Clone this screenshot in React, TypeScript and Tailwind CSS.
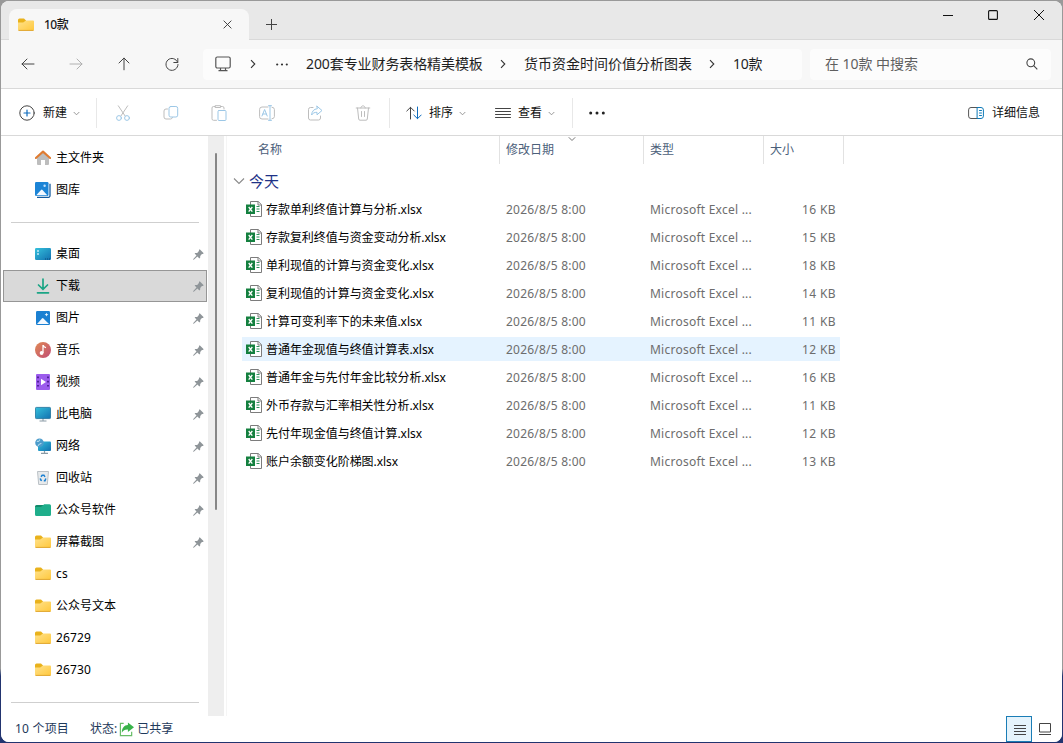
import type { ReactNode } from "react"
import clsx from "clsx"

type IconProps = { className?: string }

const places = [
  { name: "桌面", icon: <DesktopIcon />, pinned: true },
  { name: "下载", icon: <DownloadIcon />, pinned: true, active: true },
  { name: "图片", icon: <PictureIcon />, pinned: true },
  { name: "音乐", icon: <MusicIcon />, pinned: true },
  { name: "视频", icon: <VideoIcon />, pinned: true },
  { name: "此电脑", icon: <ComputerIcon />, pinned: true },
  { name: "网络", icon: <NetworkIcon />, pinned: true },
  { name: "回收站", icon: <RecycleIcon />, pinned: true },
  { name: "公众号软件", icon: <GreenFolderIcon />, pinned: true },
  { name: "屏幕截图", icon: <FolderIcon />, pinned: true },
  { name: "cs", icon: <FolderIcon /> },
  { name: "公众号文本", icon: <FolderIcon /> },
  { name: "26729", icon: <FolderIcon /> },
  { name: "26730", icon: <FolderIcon /> },
]

const files = [
  { name: "存款单利终值计算与分析", size: 16 },
  { name: "存款复利终值与资金变动分析", size: 15 },
  { name: "单利现值的计算与资金变化", size: 18 },
  { name: "复利现值的计算与资金变化", size: 14 },
  { name: "计算可变利率下的未来值", size: 11 },
  { name: "普通年金现值与终值计算表", size: 12, hover: true },
  { name: "普通年金与先付年金比较分析", size: 16 },
  { name: "外币存款与汇率相关性分析", size: 11 },
  { name: "先付年现金值与终值计算", size: 12 },
  { name: "账户余额变化阶梯图", size: 13 },
]

function FolderIcon({ className = "h-4 w-4" }: IconProps) {
  return (
    <svg viewBox="0 0 16 16" className={className}>
      <defs>
        <linearGradient id="folder" x1="0" y1="0" x2="1" y2="1">
          <stop offset="0" stopColor="#ffe28c" />
          <stop offset="1" stopColor="#ffc83d" />
        </linearGradient>
      </defs>
      <path d="M0 3a1.500 1.500 0 0 1 1.500-1.500H6L8 3.500V8H0z" fill="#e9b21c" />
      <path d="M0 5.600h5.200L8 3.400h7A1 1 0 0 1 16 4.400v8a1.200 1.200 0 0 1-1.200 1.200H1.200A1.200 1.200 0 0 1 0 12.400z" fill="url(#folder)" />
      <path d="M.5 13.400h15" stroke="#e0a52c" strokeWidth="1" />
    </svg>
  )
}

function GreenFolderIcon() {
  return (
    <svg viewBox="0 0 16 16" className="h-4 w-4">
      <path d="M0 4.500A1.500 1.500 0 0 1 1.500 3H9v3H0z" fill="#128a6b" />
      <path d="M0 5h6l3.200-2.700h5.300A1.500 1.500 0 0 1 16 3.800v8.700a1.500 1.500 0 0 1-1.500 1.500h-13A1.500 1.500 0 0 1 0 12.500z" fill="#1fae8b" />
    </svg>
  )
}

function HomeIcon() {
  return (
    <svg viewBox="0 0 16 16" className="h-4 w-4">
      <path d="M2 7.500 8 2l6 5.500V14a1 1 0 0 1-1 1h-3v-5H6v5H3a1 1 0 0 1-1-1z" fill="#bdbdbd" />
      <path d="M.9 8 8 1.600 15.100 8" fill="none" stroke="#df7b31" strokeWidth="2.100" strokeLinecap="round" strokeLinejoin="round" />
    </svg>
  )
}

function GalleryIcon() {
  return (
    <svg viewBox="0 0 16 16" className="h-4 w-4">
      <path d="M15 1.800v12a1.500 1.500 0 0 1-1.500 1.500H2" fill="none" stroke="#135a9e" strokeWidth="1.300" />
      <rect width="13.500" height="14" rx="1.200" fill="#1b84d6" />
      <path d="M1.200 13.200 6 8a1 1 0 0 1 1.500 0l4.800 5.200z" fill="#f2f8ff" />
      <circle cx="9.600" cy="3.800" r="1.200" fill="#bfe0fb" />
    </svg>
  )
}

function DesktopIcon() {
  return (
    <svg viewBox="0 0 16 16" className="h-4 w-4">
      <defs>
        <linearGradient id="screen" x1="0" y1="0" x2="1" y2="1">
          <stop offset="0" stopColor="#35c1dc" />
          <stop offset="1" stopColor="#1271b0" />
        </linearGradient>
      </defs>
      <rect y="2" width="16" height="12" rx="1.200" fill="url(#screen)" />
      <path d="M2.200 4.200h1.600v1.600H2.200zM2.200 7.200h1.600v1.600H2.200z" fill="#e6f9ff" />
      <path d="M10 13h1M12 13h1M14 13h1" stroke="#0b4a79" />
    </svg>
  )
}

function DownloadIcon() {
  return (
    <svg viewBox="0 0 16 16" className="h-4 w-4" fill="none" stroke="#1ba585" strokeWidth="1.700" strokeLinecap="round">
      <path d="M8 1v10M3.500 7 8 11.300 12.500 7M2.500 14.800h11" />
    </svg>
  )
}

function PictureIcon() {
  return (
    <svg viewBox="0 0 16 16" className="h-4 w-4">
      <rect x="1" y="1" width="14" height="14" rx="1.200" fill="#1b80d2" />
      <path d="m2 14 5-5.600a1 1 0 0 1 1.400 0L14 14z" fill="#f4f9ff" />
      <path d="m11.500 2.800.6 1.300 1.300.6-1.300.6-.6 1.300-.6-1.300-1.300-.6 1.300-.6z" fill="#e8f5ff" />
    </svg>
  )
}

function MusicIcon() {
  return (
    <svg viewBox="0 0 16 16" className="h-4 w-4">
      <defs>
        <linearGradient id="music" x1="0" y1="0" x2="1" y2="1">
          <stop offset="0" stopColor="#e08a55" />
          <stop offset="1" stopColor="#c14c75" />
        </linearGradient>
      </defs>
      <circle cx="8" cy="8" r="8" fill="url(#music)" />
      <circle cx="6.600" cy="11" r="1.900" fill="#fff" />
      <path d="M8 11V3.600h.4c.4 1.400 1 1.700 2.600 2" fill="none" stroke="#fff" strokeWidth="1.300" />
    </svg>
  )
}

function VideoIcon() {
  return (
    <svg viewBox="0 0 16 16" className="h-4 w-4">
      <rect x="1" y="0" width="14" height="16" rx="1" fill="#9c5cec" />
      <path d="M3 2.500v12M13 2.500v12" stroke="#43188a" strokeWidth="1.700" strokeDasharray="1.700 2.500" />
      <path d="M6 4.800 11 8l-5 3.200z" fill="#fff" />
    </svg>
  )
}

function ComputerIcon() {
  return (
    <svg viewBox="0 0 16 16" className="h-4 w-4">
      <path d="M8 12v3M4.500 15h7" stroke="#8a9aa5" />
      <rect x=".4" y="1.400" width="15.200" height="11.200" rx="1" fill="url(#screen)" stroke="#1b6e98" strokeWidth=".8" />
    </svg>
  )
}

function NetworkIcon() {
  return (
    <svg viewBox="0 0 16 16" className="h-4 w-4">
      <path d="M9.500 12v3M6 15.400h7" stroke="#8a9aa5" strokeWidth="1.200" />
      <rect x="3" y="3.500" width="13" height="9.500" rx="1" fill="url(#screen)" />
      <circle cx="4.500" cy="4.800" r="4.300" fill="#4c9ccb" />
      <path d="M2 3c1 1 2 .5 3-1.500M3 8c.4-1.800 1.600-2 3.400-2.600" fill="none" stroke="#b5dcef" strokeWidth="1.100" />
    </svg>
  )
}

function RecycleIcon() {
  return (
    <svg viewBox="0 0 16 16" className="h-4 w-4">
      <path d="M2.500 1.500h11l-1.200 13H3.700z" fill="#e7eaec" stroke="#b3babf" strokeWidth=".9" />
      <path d="m6 6.800 1.200-1.600h1.700L10 6.800M10.800 8.500 10 10.700H8.800M6.900 10.700 5.700 10 5.300 8.300" fill="none" stroke="#1b80d2" strokeWidth="1.500" />
    </svg>
  )
}

function PinIcon() {
  return (
    <svg viewBox="0 0 11 11" className="h-[11px] w-[11px]" fill="#8f9599">
      <path d="m6.700.3 4 4-.8.700-1 .1-1.700 1.800v1.700l-.8.800-2-2L.8 10.700l-.6.100.1-.7 3.200-3.500-1.900-2 .7-.7h1.900l1.700-1.800.1-1z" />
    </svg>
  )
}

function ExcelIcon() {
  return (
    <svg viewBox="0 0 16 16" className="h-4 w-4 shrink-0">
      <path d="M4.500.5h7.700l3.300 3.200v11.800h-11z" fill="#fff" stroke="#7c7c7c" />
      <path d="M12 .5V4h3.500" fill="none" stroke="#7c7c7c" />
      <path d="M10.500 5.500h3M10.500 8h3M10.500 10.500h3" stroke="#2a9159" />
      <rect y="3.500" width="9" height="9.500" fill="#14803f" />
      <path d="m2.700 6 3.600 4.600M6.300 6l-3.600 4.600" stroke="#fff" strokeWidth="1.300" />
    </svg>
  )
}

function ChevronDown({ className = "h-[7px] w-[7px] text-[#8a8a8a]" }: IconProps) {
  return (
    <svg viewBox="0 0 8 8" className={className} fill="none" stroke="currentColor" strokeWidth="1">
      <path d="m.8 2.300 3.200 3.200 3.200-3.200" />
    </svg>
  )
}

function ChevronRight() {
  return (
    <svg viewBox="0 0 6 10" className="h-[10px] w-[6px] shrink-0" fill="none" stroke="#333" strokeWidth="1.100">
      <path d="m1 1.200 3.800 3.800L1 8.800" />
    </svg>
  )
}

function LineIcon({ children, className = "text-[#444]" }: { children: ReactNode; className?: string }) {
  return (
    <svg viewBox="0 0 16 16" className={clsx("h-4 w-4 shrink-0", className)} fill="none" stroke="currentColor" strokeLinecap="round" strokeLinejoin="round">
      {children}
    </svg>
  )
}

function TitleBar() {
  return (
    <div className="flex h-[39px] shrink-0 items-start border-b border-[#d9d9d9] bg-[#e8e8e8]">
      <div className="ml-2 mt-2 flex h-[31px] w-[240px] shrink-0 items-center rounded-t-lg bg-[#f7f7f7] pl-[9px] pr-[17px]">
        <FolderIcon />
        <span className="ml-[10px] flex-1 text-[12px] font-medium tracking-[-0.500px] text-[#1a1a1a]">10款</span>
        <svg viewBox="0 0 10 10" className="h-[9px] w-[9px]" stroke="#333" fill="none">
          <path d="m.7.7 8.600 8.600M9.300.7.7 9.300" />
        </svg>
      </div>
      <svg viewBox="0 0 11 11" className="ml-[17px] mt-[18px] h-[11px] w-[11px]" stroke="#444">
        <path d="M5.500 0v11M0 5.500h11" />
      </svg>
      <div className="ml-auto mr-[18px] mt-[9px] flex items-center">
        <svg viewBox="0 0 10 10" className="mr-[35px] h-[10px] w-[10px]" stroke="#111" fill="none">
          <path d="M0 5.500h10" />
        </svg>
        <svg viewBox="0 0 10 10" className="mr-9 h-[10px] w-[10px]" stroke="#111" fill="none" strokeWidth="1.100">
          <rect x=".6" y=".6" width="8.800" height="8.800" rx="1" />
        </svg>
        <svg viewBox="0 0 10 10" className="h-[10px] w-[10px]" stroke="#111" fill="none">
          <path d="m0 0 10 10M10 0 0 10" />
        </svg>
      </div>
    </div>
  )
}

function AddressBar() {
  return (
    <div className="flex h-[49px] shrink-0 items-center border-b border-[#d9d9d9] bg-[#f7f7f7]">
      <div className="flex w-[202px] shrink-0 items-center gap-8 pl-[19px]">
        <LineIcon><path d="M2 8h12M7 3 2 8l5 5" /></LineIcon>
        <LineIcon className="text-[#b0b0b0]"><path d="M2 8h12M9 3l5 5-5 5" /></LineIcon>
        <LineIcon><path d="M8 2.200v11.600M3 7l5-5 5 5" /></LineIcon>
        <LineIcon><path d="M13.700 6.500A6 6 0 1 0 14 8.500M13.800 2.500v4h-4" /></LineIcon>
      </div>
      <div className="flex h-[31px] w-[599px] items-center rounded bg-[#fcfcfc] pl-3 text-[#1f1f1f]">
        <svg viewBox="0 0 16 16" className="h-4 w-4 shrink-0" fill="none" stroke="#555" strokeWidth="1.200">
          <rect x=".8" y="1" width="14.400" height="11" rx="1.500" />
          <path d="M5.500 12v2.500M10.500 12v2.500M3.500 14.700h9" />
        </svg>
        <span className="ml-[19px] flex"><ChevronRight /></span>
        <svg viewBox="0 0 12 3" className="ml-5 h-[3px] w-[12px]" fill="#333">
          <circle cx="1.200" cy="1.500" r="1.100" /><circle cx="6" cy="1.500" r="1.100" /><circle cx="10.800" cy="1.500" r="1.100" />
        </svg>
        <span className="ml-[18px] w-[178px] whitespace-nowrap pb-0.5 text-[14px] tracking-[-0.090px]">200套专业财务表格精美模板</span>
        <span className="ml-[16px] flex"><ChevronRight /></span>
        <span className="ml-[18px] w-[169px] whitespace-nowrap pb-0.5 text-[14px]">货币资金时间价值分析图表</span>
        <span className="ml-[16px] flex"><ChevronRight /></span>
        <span className="ml-[18px] whitespace-nowrap pb-0.5 text-[14px] tracking-[-0.300px]">10款</span>
      </div>
      <div className="ml-2 flex h-[31px] w-[241px] items-center justify-between rounded bg-[#fcfcfc] pl-[15px] pr-[13px] text-[14px] text-[#5f5f5f]">
        <span className="pb-0.5 tracking-[-0.050px]">在 10款 中搜索</span>
        <svg viewBox="0 0 12 12" className="h-[12px] w-[12px]" fill="none" stroke="#444" strokeWidth="1.100">
          <circle cx="4.800" cy="4.800" r="3.900" />
          <path d="m7.700 7.700 3.600 3.600" />
        </svg>
      </div>
    </div>
  )
}

function ToolBar() {
  return (
    <div className="flex h-[47px] shrink-0 items-center border-b border-[#d9d9d9] bg-white pt-0.5 text-[12px] text-[#111]">
      <div className="flex h-[30px] w-[96px] shrink-0 items-center border-r border-[#e8e8e8] pl-[18px]">
        <LineIcon className="text-[#444]">
          <circle cx="8" cy="8" r="7.200" />
          <path d="M8 5v6M5 8h6" stroke="#0f6cbd" strokeWidth="1.200" />
        </LineIcon>
        <span className="ml-2 mr-[6px]">新建</span>
        <ChevronDown />
      </div>
      <div className="flex h-[30px] w-[293px] shrink-0 items-center gap-8 border-r border-[#e8e8e8] pl-[18px]">
        <LineIcon className="text-[#bdbdbd]">
          <path d="m3.300.8 6.700 10M12.700.8 6 10.800" />
          <circle cx="4" cy="13" r="2.400" stroke="#9cc7e6" /><circle cx="12" cy="13" r="2.400" stroke="#9cc7e6" />
        </LineIcon>
        <LineIcon className="text-[#bdbdbd]">
          <path d="M4.500 4H3a2 2 0 0 0-2 2v6a2 2 0 0 0 2 2h4.500a2 2 0 0 0 2-1.500" />
          <rect x="6" y="1.500" width="8.700" height="10.500" rx="1.800" stroke="#9cc7e6" />
        </LineIcon>
        <LineIcon className="text-[#bdbdbd]">
          <path d="M5.500 15.300H2.500a1.500 1.500 0 0 1-1.500-1.500V3A1.500 1.500 0 0 1 2.500 1.500H4M10 1.500h1.500A1.500 1.500 0 0 1 13 3v1" />
          <path d="M4.500.7h5v1.800h-5z" />
          <rect x="7" y="5.500" width="8" height="10" rx="1" stroke="#9cc7e6" />
        </LineIcon>
        <LineIcon className="text-[#bdbdbd]">
          <path d="M9 2H3a2.400 2.400 0 0 0-2.400 2.400v7A2.400 2.400 0 0 0 3 14h6M13 2.200a2.400 2.400 0 0 1 2.400 2.400v7A2.400 2.400 0 0 1 13 13.800" />
          <path d="m3 11 2.600-6.500L8.200 11M3.900 9h3.400M11 .7v14.600M9.500.7h3M9.500 15.300h3" stroke="#9cc7e6" />
        </LineIcon>
        <LineIcon className="text-[#bdbdbd]">
          <path d="M6 2.500H3.500a2 2 0 0 0-2 2V13a2 2 0 0 0 2 2h8a2 2 0 0 0 2-2v-2" />
          <path d="M10 1.200 15 5.500l-5 4.300V7.300C7.500 7.200 5.700 8.200 4.600 10c.2-3.500 2.200-6 5.400-6.300z" stroke="#9cc7e6" />
        </LineIcon>
        <LineIcon className="text-[#bdbdbd]">
          <path d="M1.200 3h13.600M5.800 3c0-3 4.400-3 4.400 0M2.500 3l1.200 11a1.300 1.300 0 0 0 1.300 1.200h6a1.300 1.300 0 0 0 1.300-1.200L13.500 3M6.500 6.500v5M9.500 6.500v5" />
        </LineIcon>
      </div>
      <div className="flex h-[30px] w-[183px] shrink-0 items-center border-r border-[#e8e8e8] pl-4">
        <LineIcon>
          <path d="M4.500 14V2.500M.8 6l3.700-3.700L8.200 6" />
          <path d="M11.500 2v11.500M7.800 10l3.700 3.700 3.700-3.700" stroke="#0f6cbd" />
        </LineIcon>
        <span className="ml-[7px] mr-[6px]">排序</span>
        <ChevronDown />
        <LineIcon className="ml-[29px] text-[#444]">
          <path d="M.5 3.500h15M.5 6.500h15M.5 9.500h15M.5 12.500h15" />
        </LineIcon>
        <span className="ml-[7px] mr-[6px]">查看</span>
        <ChevronDown />
      </div>
      <svg viewBox="0 0 16 4" className="ml-4 h-1 w-4" fill="#222">
        <circle cx="1.700" cy="2" r="1.500" /><circle cx="8" cy="2" r="1.500" /><circle cx="14.300" cy="2" r="1.500" />
      </svg>
      <div className="ml-auto mr-[22px] flex items-center gap-2">
        <LineIcon className="text-[#555]">
          <path d="M9.500 2.500H3a2.400 2.400 0 0 0-2.400 2.400v6.200A2.400 2.400 0 0 0 3 13.500h6.500" />
          <path d="M9.500 2.500H13a2.400 2.400 0 0 1 2.400 2.400v6.200a2.400 2.400 0 0 1-2.400 2.400H9.500zM11.500 5.500h2M11.500 8h2M11.500 10.500h2" stroke="#0f7ab8" />
        </LineIcon>
        详细信息
      </div>
    </div>
  )
}

function SideItem({ name, icon, pinned, active }: { name: string; icon: ReactNode; pinned?: boolean; active?: boolean }) {
  const latin = /^[\w]+$/.test(name)
  return (
    <li
      className={clsx(
        "ml-[2px] flex h-8 w-[204px] items-center border pl-[31px] pr-[2px]",
        active ? "border-[#969696] bg-[#d9d9d9]" : "border-transparent",
      )}
    >
      {icon}
      <span className={clsx("ml-[5px] flex-1 text-[12px] text-black", latin && "tracking-[0.150px]")}>{name}</span>
      {pinned && <PinIcon />}
    </li>
  )
}

function SideBar() {
  return (
    <aside className="flex h-full w-[223px] shrink-0 bg-white">
      <div className="w-[207px] pt-[6px]">
        <ul>
          <SideItem name="主文件夹" icon={<HomeIcon />} />
          <SideItem name="图库" icon={<GalleryIcon />} />
        </ul>
        <hr className="mb-[15px] ml-[10px] mt-4 w-[188px] border-[#cfcfcf]" />
        <ul>
          {places.map((place) => (
            <SideItem key={place.name} {...place} />
          ))}
        </ul>
        <hr className="ml-[10px] mt-4 w-[188px] border-[#cfcfcf]" />
      </div>
      <div className="w-4 bg-[#eeeeee] pl-[7px] pt-[17px]">
        <div className="h-[357px] w-[2px] rounded-full bg-[#868686]" />
      </div>
    </aside>
  )
}

function FileList() {
  return (
    <main className="ml-[2px] min-w-0 flex-1 border-l border-[#f5f5f5]">
      <div className="relative flex h-7 items-center text-[12px] text-[#4c607a]">
        <div className="flex h-full w-[273px] items-center border-r border-[#e2e2e2] pl-[31px]">名称</div>
        <div className="flex h-full w-36 items-center border-r border-[#e2e2e2] pl-[6px]">修改日期</div>
        <div className="flex h-full w-[120px] items-center border-r border-[#e2e2e2] pl-[6px]">类型</div>
        <div className="flex h-full w-20 items-center border-r border-[#e2e2e2] pl-[6px]">大小</div>
        <ChevronDown className="absolute left-[341px] top-[-1px] h-2 w-2 text-[#777]" />
      </div>
      <div className="flex h-[33px] items-center pl-[6px] pt-px text-[15px] text-[#1e3287]">
        <svg viewBox="0 0 12 12" className="mr-[4px] h-3 w-3" fill="none" stroke="#8a8a8a" strokeWidth="1.100">
          <path d="m1 3.500 5 5 5-5" />
        </svg>
        今天
      </div>
      <ul className="flex flex-col gap-1 pl-[15px]">
        {files.map((file) => (
          <li
            key={file.name}
            className={clsx("flex h-6 w-[598px] items-center pl-1 pr-[4px] text-[12px] text-[#6d6d6d]", file.hover && "bg-[#e5f3ff]")}
          >
            <ExcelIcon />
            <span className="ml-1 w-60 pt-0.5 tracking-[-0.050px] text-black">{file.name}.xlsx</span>
            <span className="w-36 pt-0.5 tracking-[0.220px]">2026/8/5 8:00</span>
            <span className="w-[120px] pt-0.5 tracking-[0.240px]">Microsoft Excel ...</span>
            <span className="flex-1 pt-0.5 text-right tracking-[0.400px]">{file.size} KB</span>
          </li>
        ))}
      </ul>
    </main>
  )
}

function StatusBar() {
  return (
    <footer className="flex h-[26px] shrink-0 items-center bg-white pl-[14px] text-[12px] text-[#1e395b]">
      <span className="w-[75px] tracking-[0.200px]">10 个项目</span>
      <span>状态:</span>
      <svg viewBox="0 0 16 16" className="ml-[2px] mr-[3px] h-4 w-[15px]" fill="none">
        <path d="M5 2H1.500v13h12v-4" stroke="#69bd68" strokeWidth="1.300" />
        <path d="M9.500 1 16 6.200l-6.500 5V8.500C6.500 8.300 4.500 9.500 3 12c0-5 2.500-8 6.500-8.200z" fill="#39b34a" />
      </svg>
      <span>已共享</span>
      <div className="ml-auto flex h-full items-center">
        <div className="flex h-full w-[26px] items-center justify-center border border-[#1a7db6] bg-[#e5f3fb] pl-0.5 pt-0.5">
          <svg viewBox="0 0 12 10" className="h-[10px] w-3" stroke="#444">
            <path d="M0 .5h12M0 3.500h12M0 6.500h12M0 9.500h12" />
          </svg>
        </div>
        <svg viewBox="0 0 12 12" className="ml-[7px] mr-[11px] h-3 w-3" stroke="#444" fill="none">
          <path d="M.5.5h11v8.500H.5zM0 11.500h12" />
        </svg>
      </div>
    </footer>
  )
}

export default function App() {
  return (
    <div className="h-[743px] w-[1063px] bg-[#22346f] font-['Noto_Sans','Noto_Sans_CJK_SC',sans-serif]">
      <div className="h-full w-full bg-linear-to-b from-[#999999] from-90% to-[#22346f] to-91% p-px">
        <div className="flex h-[741px] flex-col overflow-hidden rounded-lg bg-white">
          <TitleBar />
          <AddressBar />
          <ToolBar />
          <div className="flex min-h-0 flex-1">
            <SideBar />
            <FileList />
          </div>
          <StatusBar />
        </div>
      </div>
    </div>
  )
}
